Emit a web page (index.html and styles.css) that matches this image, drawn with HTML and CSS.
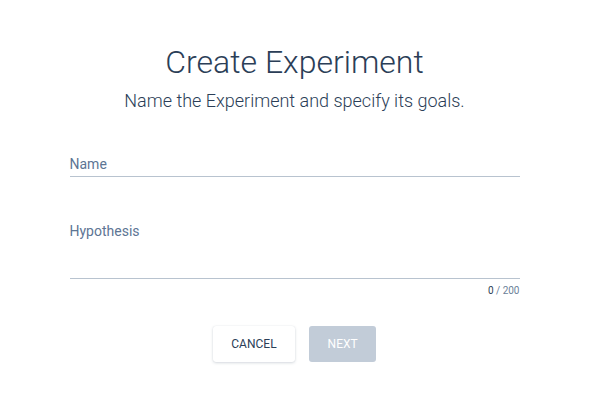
FILE: index.html
```html
<!DOCTYPE html>
<html>
<head>
<meta charset="utf-8">
<link rel="stylesheet" href="styles.css">
</head>
<body>
<div class="dialog">
  <h1 class="title">Create Experiment</h1>
  <p class="subtitle">Name the Experiment and specify its goals.</p>
  <form class="form">
    <div class="field field-name">
      <label class="label">Name</label>
    </div>
    <div class="field field-hyp">
      <label class="label">Hypothesis</label>
    </div>
    <div class="counter"><span class="count">0</span> / 200</div>
    <div class="actions">
      <button type="button" class="btn btn-cancel">CANCEL</button>
      <button type="button" class="btn btn-next" disabled>NEXT</button>
    </div>
  </form>
</div>
</body>
</html>
```

FILE: styles.css
```css
html, body {
  margin: 0;
  padding: 0;
  background: #ffffff;
}
body {
  font-family: Roboto, "Liberation Sans", sans-serif;
  width: 589px;
  height: 404px;
}
.dialog {
  width: 450px;
  margin: 0 auto;
  padding-top: 42px;
  display: flex;
  flex-direction: column;
  align-items: stretch;
}
.title {
  margin: 0;
  font-size: 32px;
  font-weight: 300;
  line-height: 40px;
  color: #2b3e57;
  text-align: center;
}
.subtitle {
  margin: 8px 0 0;
  font-size: 18px;
  font-weight: 300;
  line-height: 22px;
  color: #2b3e57;
  text-align: center;
}
.form {
  margin-top: 43px;
  display: flex;
  flex-direction: column;
}
.field {
  border-bottom: 1px solid #b8c3cf;
}
.field-name {
  height: 20px;
  padding-top: 1px;
}
.field-hyp {
  margin-top: 46px;
  height: 55px;
}
.label {
  display: block;
  font-size: 14px;
  line-height: 16px;
  color: #5d7594;
}
.counter {
  margin-top: 6px;
  text-align: right;
  font-size: 10px;
  line-height: 12px;
  color: #6b7f99;
}
.count {
  color: #2b3e57;
}
.actions {
  margin-top: 29px;
  display: flex;
  justify-content: center;
  gap: 14px;
}
.btn {
  font-family: Roboto, "Liberation Sans", sans-serif;
  font-size: 12px;
  font-weight: 400;
  height: 36px;
  border: none;
  border-radius: 3px;
  padding: 0 18.5px;
  letter-spacing: 0;
}
.btn-cancel {
  background: #ffffff;
  color: #2b3e57;
  box-shadow: 0 1px 3px rgba(30, 50, 80, 0.18), 0 0 1px rgba(30, 50, 80, 0.12);
}
.btn-next {
  background: #c2ccd8;
  color: #ffffff;
}
```
